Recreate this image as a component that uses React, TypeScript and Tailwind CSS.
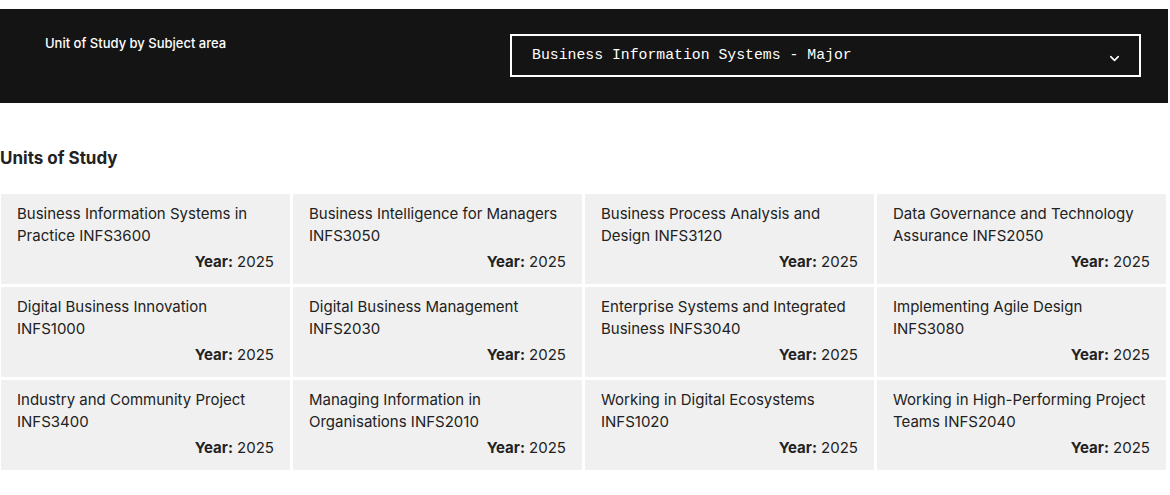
import { ChevronDown } from 'lucide-react';

const units = [
  { title: 'Business Information Systems in Practice INFS3600', year: '2025' },
  { title: 'Business Intelligence for Managers INFS3050', year: '2025' },
  { title: 'Business Process Analysis and Design INFS3120', year: '2025' },
  { title: 'Data Governance and Technology Assurance INFS2050', year: '2025' },
  { title: 'Digital Business Innovation INFS1000', year: '2025' },
  { title: 'Digital Business Management INFS2030', year: '2025' },
  { title: 'Enterprise Systems and Integrated Business INFS3040', year: '2025' },
  { title: 'Implementing Agile Design INFS3080', year: '2025' },
  { title: 'Industry and Community Project INFS3400', year: '2025' },
  { title: 'Managing Information in Organisations INFS2010', year: '2025' },
  { title: 'Working in Digital Ecosystems INFS1020', year: '2025' },
  { title: 'Working in High-Performing Project Teams INFS2040', year: '2025' },
];

function UnitCard({ title, year }: { title: string; year: string }) {
  return (
    <div className="bg-[#f0f0f0] pl-4 pr-4 pt-[9px] pb-[11px] h-[90px] flex flex-col">
      <p className="text-[15px] leading-[22px] text-[#222] h-[44px]">{title}</p>
      <p className="text-[15px] leading-[22px] text-[#222] text-right mt-[4px]">
        <span className="font-bold">Year:</span> {year}
      </p>
    </div>
  );
}

export default function App() {
  return (
    <div className="w-[1168px] bg-white pt-[9px] font-['Inter','Liberation_Sans',sans-serif]">
      {/* Filter bar */}
      <div className="bg-[#141414] h-[94px] flex items-start">
        <div className="w-[510px] pl-[45px] pt-[21px]">
          <span className="text-white text-[13px] font-medium leading-[18px]">
            Unit of Study by Subject area
          </span>
        </div>
        <div className="mt-[25px] w-[631px] h-[43px] border-2 border-white flex items-center justify-between pl-[20px] pr-[17px]">
          <span className="text-white text-[14.8px] font-['Liberation_Mono',monospace]">
            Business Information Systems - Major
          </span>
          <ChevronDown className="text-white w-[15px] h-[15px] mt-[5px]" strokeWidth={2.5} />
        </div>
      </div>

      {/* Units */}
      <h2 className="mt-[44px] text-[17px] font-bold leading-[22px] text-[#222]">Units of Study</h2>
      <div className="mt-[25px] ml-[1px] grid grid-cols-[repeat(4,289px)] gap-[3px]">
        {units.map((u) => (
          <UnitCard key={u.title} title={u.title} year={u.year} />
        ))}
      </div>
    </div>
  );
}
